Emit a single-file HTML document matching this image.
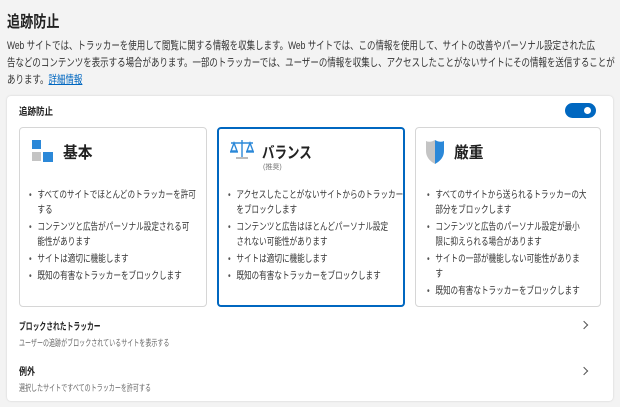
<!DOCTYPE html>
<html><head><meta charset="utf-8"><style>
*{margin:0;padding:0;box-sizing:border-box}
body{width:620px;height:407px;background:#f3f3f3;font-family:"Liberation Sans","Noto Sans CJK JP",sans-serif;color:#222;position:relative;overflow:hidden}
.a{position:absolute;white-space:nowrap;transform-origin:left top}
.t{position:absolute;font-size:16px;font-weight:bold;color:#222;white-space:nowrap;transform-origin:left top}
ul{position:absolute;list-style:none;font-size:10px;line-height:15px;color:#333;white-space:nowrap;transform:scaleX(.76);transform-origin:left top}
li{position:relative;padding-left:11px;margin-bottom:2px}
li:before{content:"•";position:absolute;left:0;color:#555}
.panel{position:absolute;left:7px;top:96px;width:606px;height:305px;background:#fff;border-radius:4px;box-shadow:0 0 2px rgba(0,0,0,.15)}
.card{position:absolute;top:127px;height:180px;border:1px solid #d6d6d6;border-radius:4px;background:#fff}
.card.sel{border:2px solid #0067c0}
.chev{position:absolute;left:581px;width:6px;height:6px;border-right:1.3px solid #555;border-top:1.3px solid #555;transform:rotate(45deg)}
</style></head><body>
<div class="a" style="left:7px;top:8px;font-size:16px;font-weight:bold;transform:scaleX(.82)">追跡防止</div>
<div class="a" style="left:7px;top:38px;font-size:11px;line-height:17px;color:#333;transform:scaleX(.77)">Web サイトでは、トラッカーを使用して閲覧に関する情報を収集します。Web サイトでは、この情報を使用して、サイトの改善やパーソナル設定された広<br>告などのコンテンツを表示する場合があります。一部のトラッカーでは、ユーザーの情報を収集し、アクセスしたことがないサイトにその情報を送信することが<br>あります。<span style="color:#0067c0;text-decoration:underline">詳細情報</span></div>
<div class="panel"></div>
<div class="a" style="left:19px;top:103px;font-size:10px;font-weight:bold;transform:scaleX(.85)">追跡防止</div>
<div class="a" style="left:565px;top:103px;width:31px;height:15px;border-radius:8px;background:#0067c0"></div>
<div class="a" style="left:584px;top:107px;width:7px;height:7px;border-radius:50%;background:#fff"></div>

<div class="card" style="left:19px;width:188px"></div>
<div class="card sel" style="left:217px;width:188px"></div>
<div class="card" style="left:415px;width:186px"></div>

<div class="a" style="left:32px;top:140px;width:9px;height:9px;background:#2b88d8"></div>
<div class="a" style="left:32px;top:152px;width:9px;height:9px;background:#c4c4c4"></div>
<div class="a" style="left:43px;top:152px;width:10px;height:10px;background:#2b88d8"></div>
<div class="t" style="left:63px;top:139px;transform:scaleX(.92)">基本</div>

<svg class="a" style="left:229px;top:139px" width="26" height="24" viewBox="0 0 26 24"><g stroke="#2b88d8" stroke-width="1.4" fill="none"><line x1="2" y1="4" x2="24" y2="4"/><line x1="13" y1="1" x2="13" y2="18"/><path d="M5 4 L2 12 H8 Z M21 4 L18 12 H24 Z"/><line x1="1" y1="13" x2="9" y2="13"/><line x1="17" y1="13" x2="25" y2="13"/></g><line x1="7" y1="19" x2="19" y2="19" stroke="#bbb" stroke-width="2"/></svg>
<div class="t" style="left:262px;top:139px;transform:scaleX(.78)">バランス</div>
<div class="a" style="left:263px;top:162px;font-size:7px;color:#777">(推奨)</div>

<svg class="a" style="left:425px;top:139px" width="20" height="26" viewBox="0 0 20 26"><path d="M1 2 Q5 4 10 1 V25 Q1 20 1 12 Z" fill="#c4c4c4"/><path d="M10 1 Q15 4 19 2 V12 Q19 20 10 25 Z" fill="#2b88d8"/></svg>
<div class="t" style="left:454px;top:139px;transform:scaleX(.92)">厳重</div>

<ul style="left:29px;top:188px">
<li>すべてのサイトでほとんどのトラッカーを許可<br>する</li>
<li>コンテンツと広告がパーソナル設定される可<br>能性があります</li>
<li>サイトは適切に機能します</li>
<li>既知の有害なトラッカーをブロックします</li></ul>
<ul style="left:228px;top:188px">
<li>アクセスしたことがないサイトからのトラッカー<br>をブロックします</li>
<li>コンテンツと広告はほとんどパーソナル設定<br>されない可能性があります</li>
<li>サイトは適切に機能します</li>
<li>既知の有害なトラッカーをブロックします</li></ul>
<ul style="left:427px;top:188px">
<li>すべてのサイトから送られるトラッカーの大<br>部分をブロックします</li>
<li>コンテンツと広告のパーソナル設定が最小<br>限に抑えられる場合があります</li>
<li>サイトの一部が機能しない可能性がありま<br>す</li>
<li>既知の有害なトラッカーをブロックします</li></ul>

<div class="a" style="left:19px;top:318px;font-size:10px;font-weight:bold;transform:scaleX(.68)">ブロックされたトラッカー</div>
<div class="a" style="left:19px;top:336px;font-size:9px;color:#666;transform:scaleX(.67)">ユーザーの追跡がブロックされているサイトを表示する</div>
<div class="chev" style="top:322px"></div>
<div class="a" style="left:19px;top:363px;font-size:10px;font-weight:bold;transform:scaleX(.8)">例外</div>
<div class="a" style="left:19px;top:381px;font-size:9px;color:#666;transform:scaleX(.67)">選択したサイトですべてのトラッカーを許可する</div>
<div class="chev" style="top:368px"></div>
</body></html>
